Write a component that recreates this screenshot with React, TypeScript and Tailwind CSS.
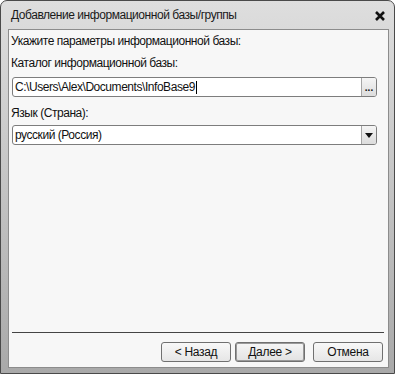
import React from 'react';

const font = { fontFamily: '"Liberation Sans", Arial, sans-serif' };

function WinButton({ label, isDefault }: { label: string; isDefault?: boolean }) {
  return (
    <div
      className={
        'w-[70px] h-[20px] rounded-[3px] border border-[#707070] flex items-center justify-center text-[12px] tracking-[-0.3px] text-[#111] ' +
        (isDefault
          ? 'bg-gradient-to-b from-[#f6f6f6] to-[#e2e2e2] shadow-[inset_0_0_0_1px_#9a9a9a]'
          : 'bg-gradient-to-b from-[#f8f8f8] to-[#e6e6e6]')
      }
    >
      {label}
    </div>
  );
}

export default function App() {
  return (
    <div className="w-[395px] h-[375px] bg-white" style={font}>
      <div className="w-[395px] h-[374px] rounded-t-[7px] border border-[#4a4a4a] bg-gradient-to-b from-[#dedede] via-[#c4c4c4] to-[#a9a9a9] flex flex-col pl-[7px] pr-[5px] pb-[5px]">
        {/* Title bar */}
        <div className="h-[28px] flex items-center justify-between pl-[3px] pr-[4px] shrink-0">
          <span className="text-[12px] tracking-[-0.45px] text-[#1a1a1a]">Добавление информационной базы/группы</span>
          <svg width="10" height="10" viewBox="0 0 10 10" className="mt-[1px]">
            <path d="M1 1 L9 9 M9 1 L1 9" stroke="#111" strokeWidth="2.6" />
          </svg>
        </div>

        {/* Content */}
        <div className="flex-1 bg-[#f7f7f7] border border-[#8c8c8c] flex flex-col text-[12px] tracking-[-0.45px] text-[#111]">
          <div className="pl-[2px] pt-[3px] leading-[16px]">Укажите параметры информационной базы:</div>
          <div className="pl-[2px] mt-[6px] leading-[16px]">Каталог информационной базы:</div>

          <div className="ml-[3px] mr-[11px] mt-[6px] h-[20px] bg-white border border-[#7d7d7d] rounded-[3px] flex items-stretch">
            <div className="flex-1 flex items-center pl-[2px]">
              <span>C:\Users\Alex\Documents\InfoBase9</span>
              <span className="w-px h-[13px] bg-black ml-[1px]" />
            </div>
            <div className="w-[15px] border-l border-[#a5a5a5] bg-gradient-to-b from-[#f5f5f5] to-[#dcdcdc] rounded-r-[2px] flex items-end justify-center pb-[3px] text-[10px] leading-none font-bold tracking-normal">
              ...
            </div>
          </div>

          <div className="pl-[2px] mt-[8px] leading-[16px]">Язык (Страна):</div>

          <div className="ml-[3px] mr-[11px] mt-[4px] h-[20px] bg-white border border-[#7d7d7d] rounded-[3px] flex items-stretch">
            <div className="flex-1 flex items-center pl-[2px]">русский (Россия)</div>
            <div className="w-[15px] border-l border-[#a5a5a5] bg-gradient-to-b from-[#f5f5f5] to-[#dcdcdc] rounded-r-[2px] flex items-center justify-center">
              <svg width="8" height="5" viewBox="0 0 8 5">
                <path d="M0 0 H8 L4 5 Z" fill="#111" />
              </svg>
            </div>
          </div>

          <div className="flex-1" />

          <div className="ml-[3px] mr-[4px] h-px bg-[#444]" />

          <div className="flex justify-end pr-[5px] pt-[9px] pb-[5px]">
            <WinButton label="< Назад" />
            <div className="ml-[4px]">
              <WinButton label="Далее >" isDefault />
            </div>
            <div className="ml-[8px]">
              <WinButton label="Отмена" />
            </div>
          </div>
        </div>
      </div>
    </div>
  );
}
